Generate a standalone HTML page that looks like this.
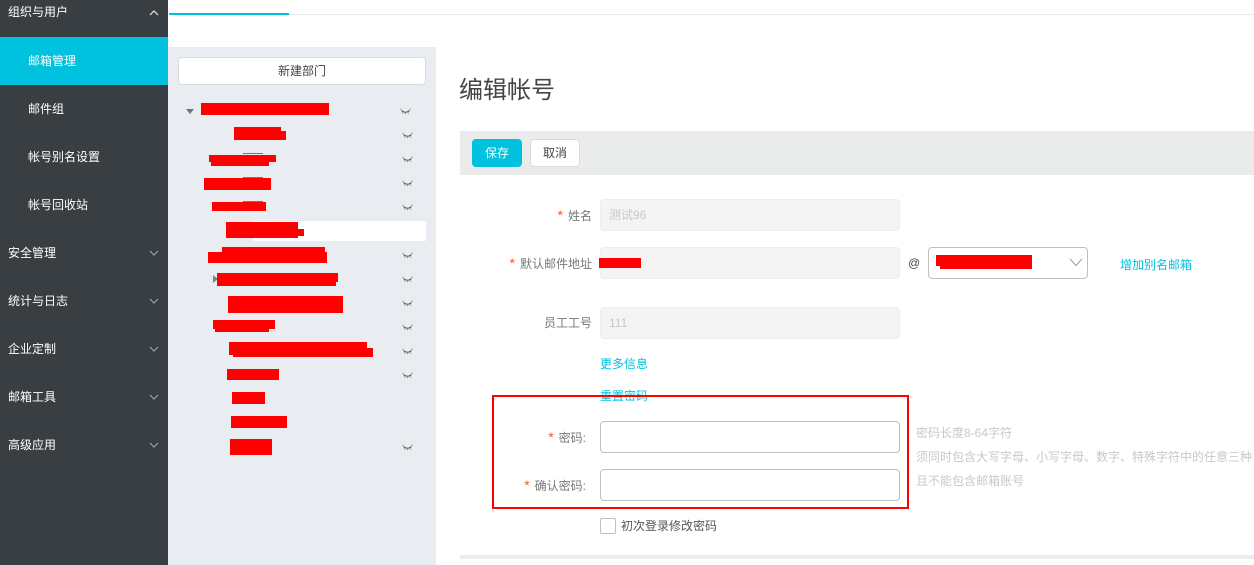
<!DOCTYPE html>
<html lang="zh">
<head>
<meta charset="utf-8">
<title>编辑帐号</title>
<style>
html,body{margin:0;padding:0;background:#fff}
body{width:1254px;height:565px;position:relative;overflow:hidden;font-family:"Liberation Sans","Noto Sans CJK SC","WenQuanYi Zen Hei",sans-serif;font-size:12px;color:#666}
div,span,svg{position:absolute;box-sizing:border-box}
.t{white-space:nowrap;line-height:16px;height:16px}
.nav{color:#fff;left:8px}
.sub{color:#fff;left:28px}
.r{background:#f00}
.lab{text-align:right;color:#777;white-space:nowrap;line-height:16px;height:16px;right:662px}
.lab i{font-style:normal;color:#f4552c;margin-right:5px;font-size:14px}
.inp{left:600px;width:300px;height:32px;border:1px solid #eeeeee;border-radius:4px;background:#f4f4f4}
.pw{background:#fff;border-color:#c0c0c0}
.link{color:#00c1de}
.hint{color:#c8c8c8;left:916px}
.eye{fill:none}
.eye .c{stroke:#4a4e53;stroke-width:1}
.eye .l{stroke:#9b9a96;stroke-width:.8}
</style>
</head>
<body>
<!-- sidebar -->
<div style="left:0;top:0;width:168px;height:565px;background:#393e43"></div>
<div style="left:0;top:37px;width:168px;height:48px;background:#00c1de"></div>
<div class="t nav" style="top:4px">组织与用户</div>
<div class="t sub" style="top:53px">邮箱管理</div>
<div class="t sub" style="top:101px">邮件组</div>
<div class="t sub" style="top:149px">帐号别名设置</div>
<div class="t sub" style="top:197px">帐号回收站</div>
<div class="t nav" style="top:245px">安全管理</div>
<div class="t nav" style="top:293px">统计与日志</div>
<div class="t nav" style="top:341px">企业定制</div>
<div class="t nav" style="top:389px">邮箱工具</div>
<div class="t nav" style="top:437px">高级应用</div>
<svg style="left:148px;top:9px" width="12" height="8" viewBox="0 0 12 8"><path d="M2 6L6 2L10 6" fill="none" stroke="#e8eaec" stroke-width="1.2"/></svg>
<svg style="left:148px;top:249px" width="12" height="8" viewBox="0 0 12 8"><path d="M2 2L6 6L10 2" fill="none" stroke="#9aa0a6" stroke-width="1.2"/></svg>
<svg style="left:148px;top:297px" width="12" height="8" viewBox="0 0 12 8"><path d="M2 2L6 6L10 2" fill="none" stroke="#9aa0a6" stroke-width="1.2"/></svg>
<svg style="left:148px;top:345px" width="12" height="8" viewBox="0 0 12 8"><path d="M2 2L6 6L10 2" fill="none" stroke="#9aa0a6" stroke-width="1.2"/></svg>
<svg style="left:148px;top:393px" width="12" height="8" viewBox="0 0 12 8"><path d="M2 2L6 6L10 2" fill="none" stroke="#9aa0a6" stroke-width="1.2"/></svg>
<svg style="left:148px;top:441px" width="12" height="8" viewBox="0 0 12 8"><path d="M2 2L6 6L10 2" fill="none" stroke="#9aa0a6" stroke-width="1.2"/></svg>

<!-- top tab -->
<div style="left:169px;top:14px;width:1085px;height:1px;background:#e8eaec"></div>
<div style="left:169px;top:13px;width:120px;height:2px;background:#00c1de"></div>

<!-- tree panel -->
<div style="left:168px;top:47px;width:268px;height:518px;background:#e9ecf1"></div>
<div class="t" style="left:178px;top:57px;width:248px;height:28px;line-height:26px;text-align:center;background:#fff;border:1px solid #d9dbde;border-radius:4px;color:#444">新建部门</div>
<div style="left:253px;top:221px;width:173px;height:20px;background:#fff;border-radius:2px"></div>
<svg style="left:186px;top:109px" width="8" height="6" viewBox="0 0 8 6"><path d="M0 0H8L4 5Z" fill="#6f747a"/></svg>
<svg style="left:213px;top:275px" width="5" height="8" viewBox="0 0 5 8"><path d="M0 0V8L5 4Z" fill="#7d8287"/></svg>

<!-- redactions -->
<div class="r" style="left:201px;top:103px;width:128px;height:12px"></div>
<div class="r" style="left:234px;top:127px;width:47px;height:6px"></div>
<div class="r" style="left:234px;top:131px;width:52px;height:9px"></div>
<div style="left:243px;top:153px;width:20px;height:1px;background:#777"></div>
<div class="r" style="left:209px;top:155px;width:67px;height:7px"></div>
<div class="r" style="left:211px;top:162px;width:58px;height:4px"></div>
<div style="left:243px;top:177px;width:20px;height:1px;background:#777"></div>
<div class="r" style="left:204px;top:178px;width:67px;height:12px"></div>
<div style="left:243px;top:201px;width:20px;height:1px;background:#777"></div>
<div class="r" style="left:212px;top:202px;width:54px;height:9px"></div>
<div class="r" style="left:226px;top:222px;width:72px;height:16px"></div>
<div class="r" style="left:298px;top:229px;width:6px;height:7px"></div>
<div class="r" style="left:222px;top:247px;width:103px;height:6px"></div>
<div class="r" style="left:208px;top:252px;width:119px;height:11px"></div>
<div class="r" style="left:217px;top:273px;width:121px;height:9px"></div>
<div class="r" style="left:217px;top:282px;width:119px;height:4px"></div>
<div class="r" style="left:228px;top:296px;width:115px;height:17px"></div>
<div class="r" style="left:213px;top:320px;width:62px;height:9px"></div>
<div class="r" style="left:215px;top:329px;width:54px;height:3px"></div>
<div class="r" style="left:229px;top:342px;width:138px;height:13px"></div>
<div class="r" style="left:233px;top:348px;width:140px;height:9px"></div>
<div class="r" style="left:227px;top:369px;width:52px;height:11px"></div>
<div class="r" style="left:232px;top:392px;width:33px;height:12px"></div>
<div class="r" style="left:231px;top:416px;width:56px;height:12px"></div>
<div class="r" style="left:230px;top:439px;width:42px;height:16px"></div>

<!-- eye icons -->
<svg class="eye" style="left:400px;top:108px" width="11" height="8" viewBox="0 0 11 8"><path class="c" d="M1.500 2.500Q5.500 6 9.500 2.500"/><path class="l" d="M1.500 2.500L0.500 0.500M9.500 2.500L10.500 0.500M3 4L2.300 6M8 4L8.700 6M5.500 4.500V6.500"/></svg>
<svg class="eye" style="left:402px;top:132px" width="11" height="8" viewBox="0 0 11 8"><path class="c" d="M1.500 2.500Q5.500 6 9.500 2.500"/><path class="l" d="M1.500 2.500L0.500 0.500M9.500 2.500L10.500 0.500M3 4L2.300 6M8 4L8.700 6M5.500 4.500V6.500"/></svg>
<svg class="eye" style="left:402px;top:156px" width="11" height="8" viewBox="0 0 11 8"><path class="c" d="M1.500 2.500Q5.500 6 9.500 2.500"/><path class="l" d="M1.500 2.500L0.500 0.500M9.500 2.500L10.500 0.500M3 4L2.300 6M8 4L8.700 6M5.500 4.500V6.500"/></svg>
<svg class="eye" style="left:402px;top:180px" width="11" height="8" viewBox="0 0 11 8"><path class="c" d="M1.500 2.500Q5.500 6 9.500 2.500"/><path class="l" d="M1.500 2.500L0.500 0.500M9.500 2.500L10.500 0.500M3 4L2.300 6M8 4L8.700 6M5.500 4.500V6.500"/></svg>
<svg class="eye" style="left:402px;top:204px" width="11" height="8" viewBox="0 0 11 8"><path class="c" d="M1.500 2.500Q5.500 6 9.500 2.500"/><path class="l" d="M1.500 2.500L0.500 0.500M9.500 2.500L10.500 0.500M3 4L2.300 6M8 4L8.700 6M5.500 4.500V6.500"/></svg>
<svg class="eye" style="left:402px;top:252px" width="11" height="8" viewBox="0 0 11 8"><path class="c" d="M1.500 2.500Q5.500 6 9.500 2.500"/><path class="l" d="M1.500 2.500L0.500 0.500M9.500 2.500L10.500 0.500M3 4L2.300 6M8 4L8.700 6M5.500 4.500V6.500"/></svg>
<svg class="eye" style="left:402px;top:276px" width="11" height="8" viewBox="0 0 11 8"><path class="c" d="M1.500 2.500Q5.500 6 9.500 2.500"/><path class="l" d="M1.500 2.500L0.500 0.500M9.500 2.500L10.500 0.500M3 4L2.300 6M8 4L8.700 6M5.500 4.500V6.500"/></svg>
<svg class="eye" style="left:402px;top:300px" width="11" height="8" viewBox="0 0 11 8"><path class="c" d="M1.500 2.500Q5.500 6 9.500 2.500"/><path class="l" d="M1.500 2.500L0.500 0.500M9.500 2.500L10.500 0.500M3 4L2.300 6M8 4L8.700 6M5.500 4.500V6.500"/></svg>
<svg class="eye" style="left:402px;top:324px" width="11" height="8" viewBox="0 0 11 8"><path class="c" d="M1.500 2.500Q5.500 6 9.500 2.500"/><path class="l" d="M1.500 2.500L0.500 0.500M9.500 2.500L10.500 0.500M3 4L2.300 6M8 4L8.700 6M5.500 4.500V6.500"/></svg>
<svg class="eye" style="left:402px;top:348px" width="11" height="8" viewBox="0 0 11 8"><path class="c" d="M1.500 2.500Q5.500 6 9.500 2.500"/><path class="l" d="M1.500 2.500L0.500 0.500M9.500 2.500L10.500 0.500M3 4L2.300 6M8 4L8.700 6M5.500 4.500V6.500"/></svg>
<svg class="eye" style="left:402px;top:372px" width="11" height="8" viewBox="0 0 11 8"><path class="c" d="M1.500 2.500Q5.500 6 9.500 2.500"/><path class="l" d="M1.500 2.500L0.500 0.500M9.500 2.500L10.500 0.500M3 4L2.300 6M8 4L8.700 6M5.500 4.500V6.500"/></svg>
<svg class="eye" style="left:402px;top:444px" width="11" height="8" viewBox="0 0 11 8"><path class="c" d="M1.500 2.500Q5.500 6 9.500 2.500"/><path class="l" d="M1.500 2.500L0.500 0.500M9.500 2.500L10.500 0.500M3 4L2.300 6M8 4L8.700 6M5.500 4.500V6.500"/></svg>

<!-- main -->
<div class="t" style="left:459px;top:75px;font-size:24px;line-height:32px;height:32px;color:#444">编辑帐号</div>
<div style="left:460px;top:131px;width:794px;height:44px;background:#eaebeb"></div>
<div class="t" style="left:472px;top:139px;width:50px;height:28px;line-height:28px;text-align:center;background:#00c1de;border-radius:4px;color:#fff">保存</div>
<div class="t" style="left:530px;top:139px;width:50px;height:28px;line-height:26px;text-align:center;background:#fff;border:1px solid #d9dbde;border-radius:4px;color:#444">取消</div>

<div class="lab" style="top:207px"><i>*</i>姓名</div>
<div class="inp" style="top:199px"></div>
<div class="t" style="left:609px;top:207px;color:#c8c8c8">测试96</div>

<div class="lab" style="top:255px"><i>*</i>默认邮件地址</div>
<div class="inp" style="top:247px"></div>
<div class="r" style="left:599px;top:258px;width:42px;height:10px"></div>
<div class="t" style="left:908px;top:255px;color:#444">@</div>
<div class="inp pw" style="left:928px;top:247px;width:160px"></div>
<div class="r" style="left:936px;top:255px;width:5px;height:11px"></div>
<div class="r" style="left:940px;top:255px;width:92px;height:14px"></div>
<svg style="left:1068px;top:257px" width="16" height="11" viewBox="0 0 16 11"><path d="M2 2L8 8.500L14 2" fill="none" stroke="#9a9fa4" stroke-width="1"/></svg>
<div class="t link" style="left:1120px;top:257px">增加别名邮箱</div>

<div class="lab" style="top:315px">员工工号</div>
<div class="inp" style="top:307px"></div>
<div class="t" style="left:609px;top:315px;color:#c8c8c8">111</div>

<div class="t link" style="left:600px;top:356px">更多信息</div>
<div class="t link" style="left:600px;top:388px">重置密码</div>

<div class="lab" style="top:429px;right:668px"><i>*</i>密码:</div>
<div class="inp pw" style="top:421px"></div>
<div class="lab" style="top:477px;right:668px"><i>*</i>确认密码:</div>
<div class="inp pw" style="top:469px"></div>

<div class="t hint" style="top:425px">密码长度8-64字符</div>
<div class="t hint" style="top:449px">须同时包含大写字母、小写字母、数字、特殊字符中的任意三种</div>
<div class="t hint" style="top:473px">且不能包含邮箱账号</div>

<div style="left:600px;top:518px;width:16px;height:16px;background:#fff;border:1px solid #c0c0c0;border-radius:2px"></div>
<div class="t" style="left:621px;top:518px;color:#555">初次登录修改密码</div>

<div style="left:460px;top:555px;width:794px;height:4px;background:#e9ecf1"></div>

<!-- annotation -->
<div style="left:492px;top:395px;width:417px;height:114px;border:2px solid #f00"></div>
</body>
</html>
